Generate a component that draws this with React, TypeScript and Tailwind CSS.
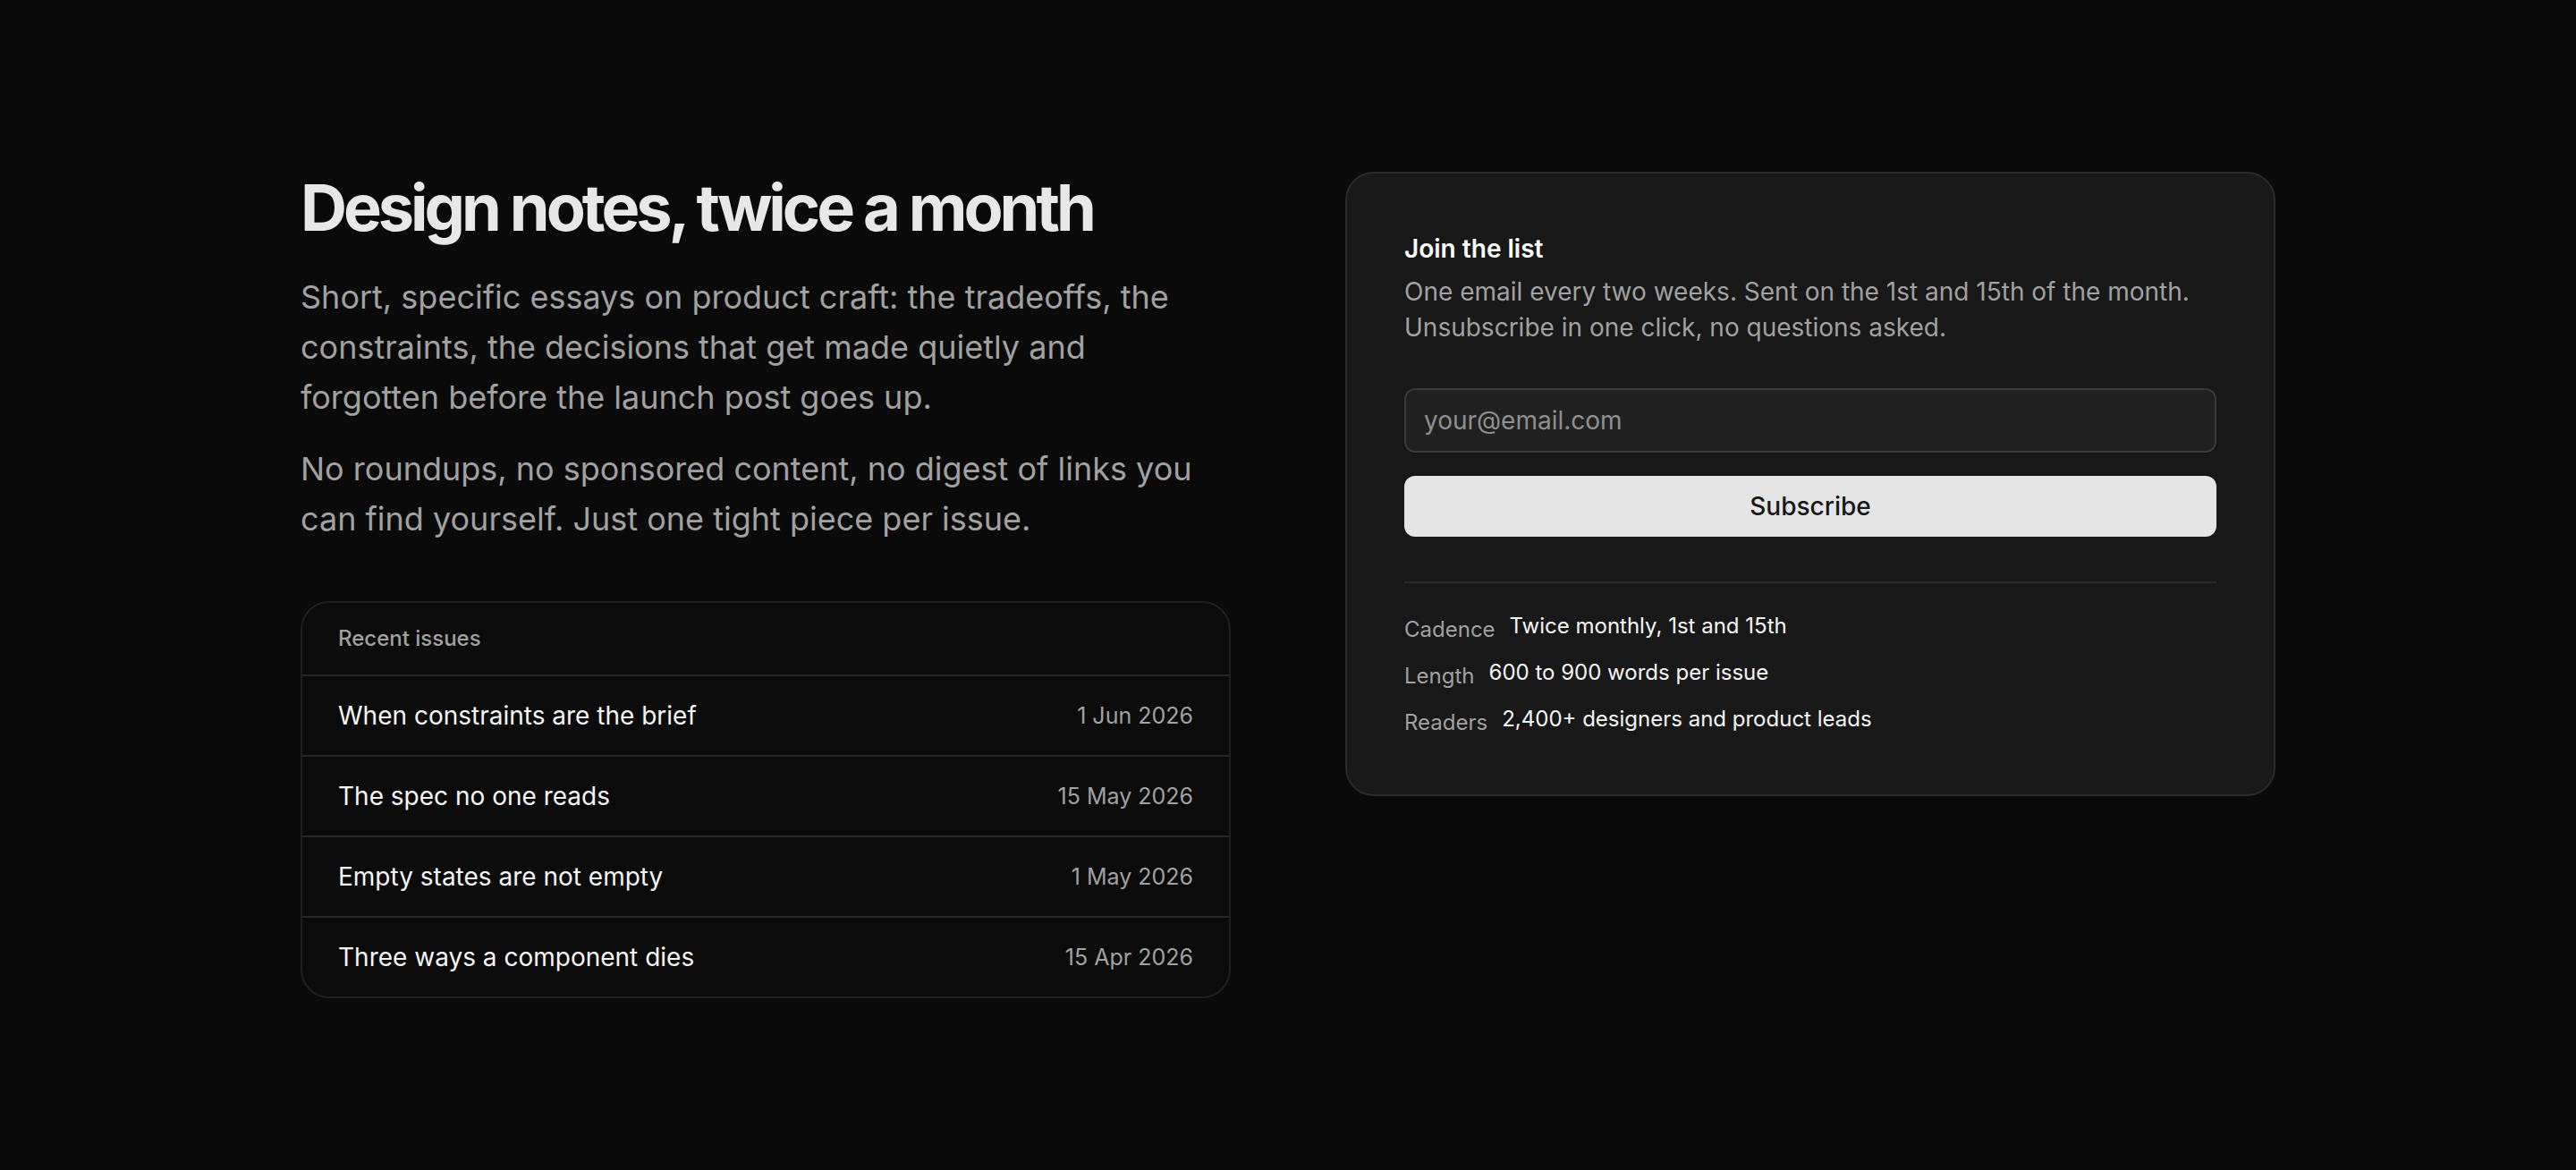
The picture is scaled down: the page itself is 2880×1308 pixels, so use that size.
import React from "react";

const issues = [
  { title: "When constraints are the brief", date: "1 Jun 2026" },
  { title: "The spec no one reads", date: "15 May 2026" },
  { title: "Empty states are not empty", date: "1 May 2026" },
  { title: "Three ways a component dies", date: "15 Apr 2026" },
];

const facts = [
  { label: "Cadence", value: "Twice monthly, 1st and 15th" },
  { label: "Length", value: "600 to 900 words per issue" },
  { label: "Readers", value: "2,400+ designers and product leads" },
];

export default function App() {
  return (
    <main
      className="min-h-screen bg-[#0a0a0a] text-neutral-100"
      style={{ fontFamily: "Inter, 'Noto Sans', sans-serif" }}
    >
      <div className="mx-auto grid max-w-[2304px] grid-cols-2 items-start gap-32 px-12 py-48">
        {/* left column */}
        <section>
          <h1 className="text-[72px] font-bold leading-[80px] tracking-[-0.056em] text-[#e8e8e8]">
            Design notes, twice a month
          </h1>
          <p className="mt-8 text-[36px] leading-[56px] text-neutral-400">
            Short, specific essays on product craft: the tradeoffs, the constraints, the decisions
            that get made quietly and forgotten before the launch post goes up.
          </p>
          <p className="mt-6 text-[36px] leading-[56px] text-neutral-400">
            No roundups, no sponsored content, no digest of links you can find yourself. Just one
            tight piece per issue.
          </p>

          <div className="mt-16 overflow-hidden rounded-[32px] border-2 border-[#202020] bg-[#0b0b0b]">
            <div className="border-b-2 border-[#262626] px-10 py-6 text-[24px] font-medium leading-[32px] text-neutral-400">
              Recent issues
            </div>
            <ul className="divide-y-2 divide-[#262626]">
              {issues.map((it) => (
                <li key={it.title} className="flex items-center justify-between px-10 py-6">
                  <span className="text-[28px] leading-[40px] text-neutral-100">{it.title}</span>
                  <span className="text-[25px] leading-[40px] text-neutral-400">{it.date}</span>
                </li>
              ))}
            </ul>
          </div>
        </section>

        {/* right column */}
        <section className="rounded-[32px] border-2 border-[#2a2a2a] bg-[#181818] p-16">
          <h2 className="text-[28px] font-semibold leading-[40px] text-white">Join the list</h2>
          <p className="mt-2 text-[28px] leading-[40px] text-neutral-400">
            One email every two weeks. Sent on the 1st and 15th of the month. Unsubscribe in one
            click, no questions asked.
          </p>

          <form className="mt-12 flex flex-col gap-[26px]" onSubmit={(e) => e.preventDefault()}>
            <input
              type="email"
              placeholder="your@email.com"
              className="h-[72px] w-full rounded-xl border-2 border-[#3a3a3a] bg-[#212121] px-[20px] text-[28px] text-neutral-100 shadow-sm outline-none placeholder:text-[#8f8f8f]"
            />
            <button
              type="submit"
              className="h-[68px] w-full rounded-xl bg-[#e5e5e5] text-[28px] font-medium text-[#171717]"
            >
              Subscribe
            </button>
          </form>

          <dl className="mt-[50px] flex flex-col gap-4 border-t-2 border-[#2a2a2a] pt-8">
            {facts.map((f) => (
              <div key={f.label} className="flex items-start gap-4">
                <dt className="mt-1 text-[24px] leading-[32px] text-neutral-400">{f.label}</dt>
                <dd className="text-[24px] leading-[32px] text-neutral-100">{f.value}</dd>
              </div>
            ))}
          </dl>
        </section>
      </div>
    </main>
  );
}
